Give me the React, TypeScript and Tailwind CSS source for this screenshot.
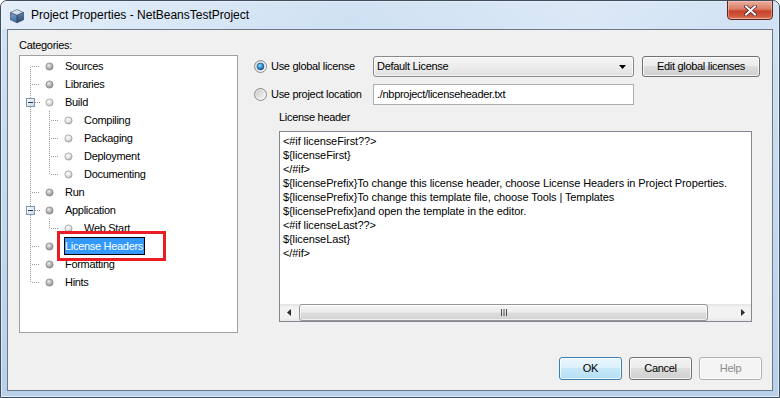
import React from 'react';

type Cell = 'first' | 'tee' | 'pipe' | 'elbow';
interface Row {
  label: string;
  cells: Cell[];
  expander?: boolean;
  light?: boolean;
  selected?: boolean;
}

const rows: Row[] = [
  { label: 'Sources', cells: ['first'] },
  { label: 'Libraries', cells: ['tee'] },
  { label: 'Build', cells: ['tee'], expander: true, light: true },
  { label: 'Compiling', cells: ['pipe', 'tee'], light: true },
  { label: 'Packaging', cells: ['pipe', 'tee'], light: true },
  { label: 'Deployment', cells: ['pipe', 'tee'], light: true },
  { label: 'Documenting', cells: ['pipe', 'elbow'], light: true },
  { label: 'Run', cells: ['tee'] },
  { label: 'Application', cells: ['tee'], expander: true },
  { label: 'Web Start', cells: ['pipe', 'elbow'], light: true },
  { label: 'License Headers', cells: ['tee'], selected: true },
  { label: 'Formatting', cells: ['tee'] },
  { label: 'Hints', cells: ['elbow'] },
];

const LC = '#9a9a9a';

function LineCell({ type, expander }: { type: Cell; expander?: boolean }) {
  const v = (y1: number, y2: number) => (
    <line x1="10.5" y1={y1} x2="10.5" y2={y2} stroke={LC} strokeWidth="1" strokeDasharray="1 1" />
  );
  const h = (x1: number) => (
    <line x1={x1} y1="9.5" x2="20" y2="9.5" stroke={LC} strokeWidth="1" strokeDasharray="1 1" />
  );
  return (
    <svg width="19" height="18" className="block shrink-0" style={{ overflow: 'visible' }}>
      {type === 'pipe' && v(0, 18)}
      {type === 'tee' && v(0, 18)}
      {type === 'elbow' && v(0, 10)}
      {type === 'first' && v(10, 18)}
      {type !== 'pipe' && h(expander ? 15 : 12)}
      {expander && (
        <g>
          <defs>
            <linearGradient id="exg" x1="0" y1="0" x2="1" y2="1">
              <stop offset="0" stopColor="#ffffff" />
              <stop offset="1" stopColor="#c9d3de" />
            </linearGradient>
          </defs>
          <rect x="6.5" y="5.5" width="8" height="8" fill="url(#exg)" stroke="#7f97b2" />
          <line x1="8" y1="9.5" x2="13" y2="9.5" stroke="#1d3a66" />
        </g>
      )}
    </svg>
  );
}

function DotIcon({ light }: { light?: boolean }) {
  return (
    <svg width="19" height="18" className="block shrink-0">
      <defs>
        <radialGradient id="dg" cx="0.4" cy="0.35" r="0.7">
          <stop offset="0" stopColor="#eeeeee" />
          <stop offset="0.6" stopColor="#adadad" />
          <stop offset="1" stopColor="#858585" />
        </radialGradient>
        <radialGradient id="dl" cx="0.4" cy="0.35" r="0.7">
          <stop offset="0" stopColor="#ffffff" />
          <stop offset="0.6" stopColor="#dcdcdc" />
          <stop offset="1" stopColor="#aaaaaa" />
        </radialGradient>
      </defs>
      <circle
        cx="10.5"
        cy="9.5"
        r="3.6"
        fill={light ? 'url(#dl)' : 'url(#dg)'}
        stroke={light ? '#a0a0a0' : '#8a8a8a'}
        strokeWidth="0.8"
      />
    </svg>
  );
}

function Radio({ checked }: { checked?: boolean }) {
  return (
    <svg width="13" height="13" className="block shrink-0">
      <defs>
        <linearGradient id="rg" x1="0" y1="0" x2="1" y2="1">
          <stop offset="0" stopColor="#d6d6d6" />
          <stop offset="1" stopColor="#ffffff" />
        </linearGradient>
        <linearGradient id="ri" x1="0" y1="0" x2="1" y2="1">
          <stop offset="0" stopColor="#cbcbcb" />
          <stop offset="1" stopColor="#f6f6f6" />
        </linearGradient>
        <radialGradient id="rb" cx="0.4" cy="0.35" r="0.7">
          <stop offset="0" stopColor="#8ee0ff" />
          <stop offset="0.55" stopColor="#2b8ed3" />
          <stop offset="1" stopColor="#0d4f8c" />
        </radialGradient>
      </defs>
      <circle cx="6.5" cy="6.5" r="6" fill="url(#rg)" stroke="#8a8a8a" />
      <circle cx="6.5" cy="6.5" r="4.3" fill="url(#ri)" />
      {checked && <circle cx="6.5" cy="6.5" r="3.4" fill="url(#rb)" stroke="#1a4d7a" strokeWidth="0.6" />}
    </svg>
  );
}

function Button({
  children,
  className,
  variant = 'normal',
}: {
  children: React.ReactNode;
  className?: string;
  variant?: 'normal' | 'default' | 'disabled';
}) {
  const v =
    variant === 'default'
      ? 'border-[#3c7fb1] bg-[linear-gradient(180deg,#eaf6fd_0%,#dbf0fb_49%,#c9e8f9_50%,#b4def5_100%)] text-black'
      : variant === 'disabled'
      ? 'border-[#adb2b5] bg-[#f4f4f4] text-[#8b8b8b]'
      : 'border-[#707070] bg-[linear-gradient(180deg,#f2f2f2_0%,#ebebeb_49%,#dddddd_50%,#cfcfcf_100%)] text-black';
  return (
    <div
      className={`flex items-center justify-center rounded-[3px] border shadow-[inset_0_0_0_1px_rgba(255,255,255,0.75)] ${v} ${className ?? ''}`}
    >
      {children}
    </div>
  );
}

const licenseLines = [
  '<#if licenseFirst??>',
  '${licenseFirst}',
  '</#if>',
  '${licensePrefix}To change this license header, choose License Headers in Project Properties.',
  '${licensePrefix}To change this template file, choose Tools | Templates',
  '${licensePrefix}and open the template in the editor.',
  '<#if licenseLast??>',
  '${licenseLast}',
  '</#if>',
];

export default function App() {
  return (
    <div className="relative flex h-[398px] w-[780px] flex-col overflow-hidden rounded-t-[7px] border border-[#3f4d5c] bg-[linear-gradient(180deg,#d3e3f4_0%,#c6dbf0_40%,#b9d0ea_100%)] font-['Liberation_Sans',Arial,sans-serif] text-[11px] tracking-[-0.3px] text-black shadow-[inset_0_0_0_1px_rgba(255,255,255,0.55)]">
      {/* Title bar */}
      <div className="relative flex h-[28px] shrink-0 items-center pl-[8px] bg-[linear-gradient(90deg,rgba(235,243,251,0.7)_0%,rgba(200,219,240,0.2)_45%,rgba(225,236,248,0.6)_75%,rgba(205,224,244,0.3)_100%)]">
        <svg width="16" height="16" viewBox="0 0 16 16" className="mt-[1px] shrink-0">
          <defs>
            <linearGradient id="ct" x1="0" y1="0" x2="1" y2="1">
              <stop offset="0" stopColor="#f4f7fb" />
              <stop offset="1" stopColor="#b9c7d8" />
            </linearGradient>
            <linearGradient id="cl" x1="0" y1="0" x2="0" y2="1">
              <stop offset="0" stopColor="#7fa3cc" />
              <stop offset="1" stopColor="#3c6797" />
            </linearGradient>
            <linearGradient id="cr" x1="0" y1="0" x2="0" y2="1">
              <stop offset="0" stopColor="#5d7fa8" />
              <stop offset="1" stopColor="#2b4a72" />
            </linearGradient>
          </defs>
          <path d="M8 1.5 L14.5 4.5 L8 7.5 L1.5 4.5 Z" fill="url(#ct)" stroke="#4b6281" strokeWidth="0.7" />
          <path d="M1.5 4.5 L8 7.5 L8 14.8 L1.5 11.8 Z" fill="url(#cl)" stroke="#3b5273" strokeWidth="0.7" />
          <path d="M14.5 4.5 L8 7.5 L8 14.8 L14.5 11.8 Z" fill="url(#cr)" stroke="#2f4566" strokeWidth="0.7" />
        </svg>
        <span className="ml-[6px] text-[12px] tracking-[0px] text-black">
          Project Properties - NetBeansTestProject
        </span>
        {/* close button */}
        <div className="absolute right-[6px] top-[-1px] flex h-[20px] w-[46px] items-center justify-center rounded-b-[4px] border border-[#5a2a22] bg-[linear-gradient(180deg,#eab0a0_0%,#dc7d66_45%,#c7442c_55%,#d0583d_85%,#e48a6b_100%)] shadow-[inset_0_0_0_1px_rgba(255,210,200,0.45)]">
          <svg width="13" height="11" viewBox="0 0 13 11">
            <path d="M2 1.5 L11 9.5 M11 1.5 L2 9.5" stroke="#4a2420" strokeWidth="3.6" strokeLinecap="square" />
            <path d="M2 1.5 L11 9.5 M11 1.5 L2 9.5" stroke="#ffffff" strokeWidth="2" strokeLinecap="square" />
          </svg>
        </div>
      </div>

      {/* Client area */}
      <div className="mx-[6px] mb-[6px] flex flex-1 flex-col border border-[#6b7887] bg-[#f0f0f0]">
        <div className="flex flex-1 px-[11px] pt-[8px]">
          {/* Left column */}
          <div className="flex w-[219px] shrink-0 flex-col">
            <div className="h-[14px] leading-[14px]">Categories:</div>
            <div className="mt-[3px] h-[278px] border border-[#a0a0a0] bg-white pt-[1px]">
              {rows.map((r) => (
                <div key={r.label} className="flex h-[18px] items-center">
                  {r.cells.map((c, i) => (
                    <LineCell key={i} type={c} expander={i === 0 && r.expander} />
                  ))}
                  <DotIcon light={r.light} />
                  {r.selected ? (
                    <span className="ml-[6px] flex h-[18px] items-center border border-black bg-[#3399ff] pr-[1px] text-white">
                      License Headers
                    </span>
                  ) : (
                    <span className="ml-[7px] leading-[18px]">{r.label}</span>
                  )}
                </div>
              ))}
            </div>
          </div>

          {/* Right column */}
          <div className="mt-[18px] flex flex-col pl-[16px]">
            <div className="flex h-[21px] items-center">
              <div className="flex w-[119px] items-center">
                <Radio checked />
                <span className="ml-[4px]">Use global license</span>
              </div>
              <div className="flex h-[21px] w-[261px] items-center justify-between rounded-[3px] border border-[#8a8a8a] bg-[linear-gradient(180deg,#f6f6f6_0%,#ececec_50%,#e0e0e0_100%)] pl-[3px] pr-[7px] shadow-[inset_0_0_0_1px_rgba(255,255,255,0.7)]">
                <span>Default License</span>
                <svg width="7" height="4" viewBox="0 0 7 4">
                  <path d="M0 0 L7 0 L3.5 4 Z" fill="#000" />
                </svg>
              </div>
              <Button className="ml-[8px] h-[21px] w-[118px]">Edit global licenses</Button>
            </div>
            <div className="mt-[7px] flex h-[21px] items-center">
              <div className="flex w-[119px] items-center">
                <Radio />
                <span className="ml-[4px]">Use project location</span>
              </div>
              <div className="flex h-[21px] w-[261px] items-center border border-[#abadb3] bg-white pl-[3px]">
                ./nbproject/licenseheader.txt
              </div>
            </div>
            <div className="ml-[25px] mt-[5px] h-[14px] leading-[14px]">License header</div>
            <div className="ml-[25px] mt-[7px] flex h-[191px] w-[473px] flex-col border border-[#828790] bg-white">
              <div className="flex-1 overflow-hidden pl-[3px] pt-[2px] tracking-[-0.1px]">
                {licenseLines.map((l, i) => (
                  <div key={i} className="h-[14px] whitespace-pre leading-[14px]">
                    {l}
                  </div>
                ))}
              </div>
              {/* horizontal scrollbar */}
              <div className="flex h-[17px] shrink-0 items-stretch bg-[linear-gradient(180deg,#e3e3e3_0%,#f2f2f2_20%,#f2f2f2_80%,#e6e6e6_100%)]">
                <div className="flex w-[17px] items-center justify-center">
                  <svg width="4" height="7" viewBox="0 0 4 7">
                    <path d="M4 0 L4 7 L0 3.5 Z" fill="#2b2b2b" />
                  </svg>
                </div>
                <div className="flex flex-1 items-stretch">
                  <div className="ml-[2px] flex w-[409px] items-center justify-center rounded-[3px] border border-[#959595] bg-[linear-gradient(180deg,#f6f6f6_0%,#ececec_45%,#dcdcdc_55%,#d2d2d2_100%)] shadow-[inset_0_0_0_1px_rgba(255,255,255,0.7)]">
                    <svg width="8" height="7" viewBox="0 0 8 7">
                      <path d="M1.5 0 V7 M4 0 V7 M6.5 0 V7" stroke="#4a4a4a" strokeWidth="1" />
                    </svg>
                  </div>
                </div>
                <div className="flex w-[17px] items-center justify-center">
                  <svg width="4" height="7" viewBox="0 0 4 7">
                    <path d="M0 0 L0 7 L4 3.5 Z" fill="#2b2b2b" />
                  </svg>
                </div>
              </div>
            </div>
          </div>
        </div>

        {/* bottom buttons */}
        <div className="flex justify-end gap-[7px] pb-[10px] pr-[10px]">
          <Button variant="default" className="h-[23px] w-[63px]">
            OK
          </Button>
          <Button className="h-[23px] w-[63px]">Cancel</Button>
          <Button variant="disabled" className="h-[23px] w-[63px]">
            Help
          </Button>
        </div>
      </div>

      {/* red annotation */}
      <div className="pointer-events-none absolute left-[56px] top-[230px] h-[30px] w-[109px] border-[3px] border-[#ea1c24]" />
    </div>
  );
}
